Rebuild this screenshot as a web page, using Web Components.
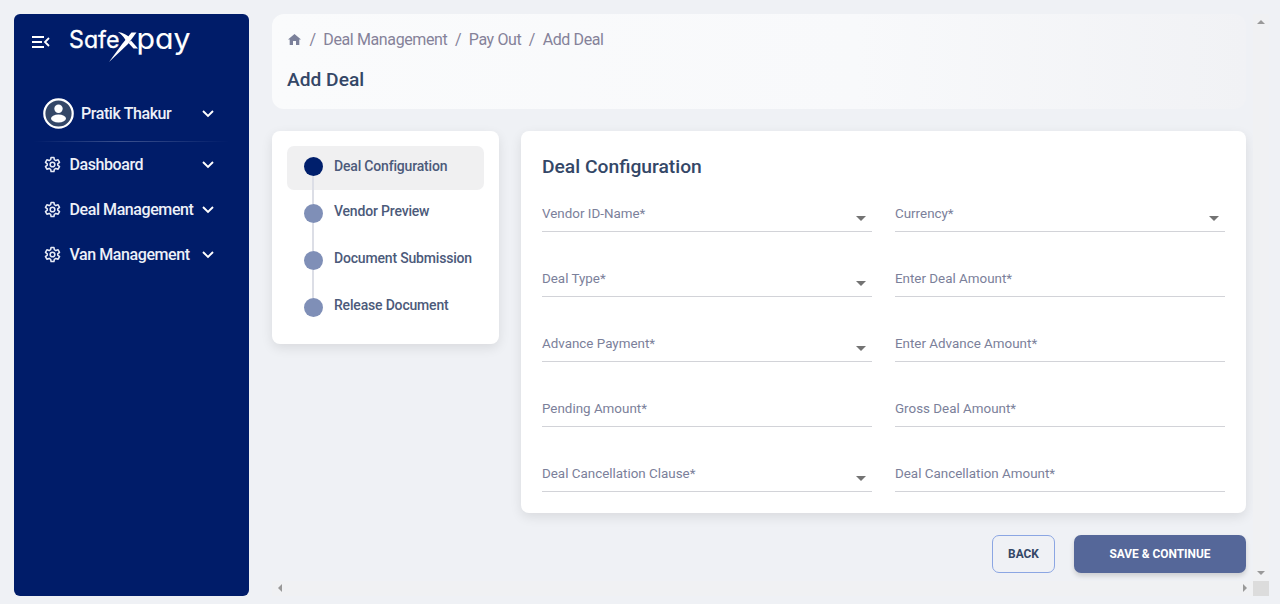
<!DOCTYPE html>
<html lang="en">
<head>
<meta charset="utf-8">
<title>Add Deal</title>
<style>
html,body{margin:0;height:100%;overflow:hidden;background:#eff1f5;font-family:Roboto,sans-serif}
</style>
</head>
<body>
<deal-app></deal-app>
<script>
const define = (name, css, html) => customElements.define(name, class extends HTMLElement {
  constructor() {
    super();
    const root = this.attachShadow({mode: 'open'});
    const t = document.createElement('template');
    const body = typeof html === 'function' ? html(this) : html;
    t.innerHTML = `<style>*{box-sizing:border-box}${css}</style>${body}`;
    root.appendChild(t.content.cloneNode(true));
  }
});

define('safe-logo', `
  :host{display:block;width:122px;height:36px}
  svg{display:block;overflow:visible}
  text{font-family:Inter,sans-serif;font-feature-settings:"cv11" 1;fill:#fff;stroke:#fff;stroke-width:.3}`,
  `<svg width="122" height="36" viewBox="0 0 122 36">
    <text x="0" y="22" font-size="24" font-weight="400" textLength="50.500" lengthAdjust="spacingAndGlyphs">Safe</text>
    <path d="M49 6C54 6.500 58.500 9 61.500 12.500L58.500 18C56.500 13 53 8.500 49 6Z" fill="#fff"/>
    <path d="M62.500 6.500H67.500L59 18L40 36L53.500 17.500L58 12Z" fill="#fff"/>
    <path d="M59.500 17L62 14.500L69 22.500H64.500Z" fill="#fff"/>
    <text x="67.500" y="22.500" font-size="29" font-weight="400" textLength="54" lengthAdjust="spacingAndGlyphs" style="stroke-width:.1">pay</text>
  </svg>`);

define('chevron-down', `:host{display:block;width:12px;height:8px}svg{display:block}`,
  `<svg width="12" height="8" viewBox="0 0 12 8"><path d="M1 1L6 6L11 1" fill="none" stroke="#fff" stroke-width="1.900"/></svg>`);

define('gear-icon', `:host{display:block;width:17px;height:17px}svg{display:block}`,
  `<svg width="17" height="17" viewBox="0 0 24 24" fill="none" stroke="#e6eaf5" stroke-width="2.200" stroke-linejoin="round"><circle cx="12" cy="12" r="3.300"/><path d="M10 2h4l.6 3.200 2.200 1.300 3.100-1.100 2 3.500-2.500 2.100v2l2.500 2.100-2 3.500-3.100-1.100-2.200 1.300L14 22h-4l-.6-3.200-2.200-1.300-3.100 1.100-2-3.500L4.600 13v-2L2.100 8.900l2-3.500 3.100 1.100 2.200-1.300z"/></svg>`);

define('nav-item', `
  :host{display:flex;align-items:center;height:45.200px;padding:0 35px 0 30px;color:#edf0f8;font-size:16px;letter-spacing:-.42px;font-weight:500;white-space:nowrap}
  span{margin-left:8.500px;flex:1}`,
  `<gear-icon></gear-icon><span><slot></slot></span><chevron-down></chevron-down>`);

define('side-bar', `
  :host{display:block;width:235.400px;height:582.400px;background:#001c69;border-radius:6px;flex:none}
  .top{display:flex;padding:12px 0 0 18px;height:84px}
  .menu{margin:10px 19px 0 0;display:block}
  .user{display:flex;align-items:center;height:31px;padding:0 35px 0 29px;color:#edf0f8;font-size:16px;letter-spacing:-.42px;font-weight:500}
  .user span{flex:1;margin-left:7px}
  hr{border:0;height:1px;margin:12px 20px 0;background:linear-gradient(90deg,#7686b400,#7686b480 45%,#7686b400)}`,
  `<div class="top">
    <svg class="menu" width="18" height="12" viewBox="0 0 18 12" fill="none" stroke="#fff" stroke-width="1.800"><path d="M0 1h12M0 6h10M0 11h12M17 2L13 6L17 10"/></svg>
    <safe-logo></safe-logo>
  </div>
  <div class="user">
    <svg width="31" height="31" viewBox="0 0 31 31"><circle cx="15.500" cy="15.500" r="14.200" fill="#344767" stroke="#fff" stroke-width="2.200"/><circle cx="15.500" cy="10.800" r="4.200" fill="#fff"/><ellipse cx="15.500" cy="20.500" rx="7.500" ry="4" fill="#fff"/></svg>
    <span>Pratik Thakur</span><chevron-down></chevron-down>
  </div>
  <hr>
  <nav><nav-item>Dashboard</nav-item><nav-item>Deal Management</nav-item><nav-item>Van Management</nav-item></nav>`);

define('page-header', `
  :host{display:block;height:95px;border-radius:12px;padding:14px 15px 0;background:linear-gradient(90deg,#fafbfc,#f8f9fb 60%,#f1f2f5)}
  .crumbs{display:flex;align-items:center;height:22px;color:#858299;font-size:16px;letter-spacing:-.38px;white-space:pre}
  svg{margin:0 1px;display:block}
  i{font-style:normal;margin:0 7.600px 0 7.500px}
  h1{margin:18.500px 0 0;font-size:19.200px;line-height:22px;font-weight:500;color:#344767}`,
  `<div class="crumbs"><svg width="13" height="11" viewBox="0 0 13 12" preserveAspectRatio="none"><path d="M6.500 0L13 6H11.300V12H8V7.700H5V12H1.700V6H0Z" fill="#7b809a"/></svg><i>/</i><span>Deal Management</span><i>/</i><span>Pay Out</span><i>/</i><span>Add Deal</span></div>
  <h1>Add Deal</h1>`);

define('step-item', `
  :host{display:flex;height:47px;margin-left:17px;color:#4c5a7a;font-size:14px;letter-spacing:-.18px;font-weight:500}
  .rail{width:19px;display:flex;flex-direction:column;align-items:center}
  b{width:19px;height:19px;border-radius:50%;background:#7f8fb7;flex:none}
  .rail::after{content:"";flex:1;width:2px;background:#dcdee6}
  :host([last]) .rail::after{display:none}
  :host([active]) b{background:#001f6c}
  span{margin:-1.500px 0 0 11px;line-height:16px;white-space:nowrap}
  :host([active]) span{margin-top:1.200px}`,
  `<div class="rail"><b></b></div><span><slot></slot></span>`);

define('step-card', `
  :host{display:grid;width:227px;height:213px;padding:15px;border-radius:8px;background:#fff;box-shadow:0 4px 12px #00000018;flex:none;grid-template-rows:44px 1fr}
  .hl,.list{grid-column:1}
  .hl{grid-row:1;background:#f0f0f1;border-radius:7px}
  .list{grid-row:1/3;padding-top:11.500px}`,
  `<div class="hl"></div><div class="list"><step-item active>Deal Configuration</step-item><step-item>Vendor Preview</step-item><step-item>Document Submission</step-item><step-item last>Release Document</step-item></div>`);

define('form-field', `
  :host{display:flex;height:65px;align-items:flex-start}
  .f{display:flex;flex:1;justify-content:space-between;height:26px;border-bottom:1px solid #d2d3d8;font-size:13.400px;line-height:16px;color:#7b809a;padding-right:6px}
  svg{display:none;margin-top:10px}
  :host([select]) svg{display:block}`,
  `<div class="f"><slot></slot><svg width="10" height="5" viewBox="0 0 10 5"><path d="M0 0H10L5 5Z" fill="#737373"/></svg></div>`);

define('deal-form', `
  :host{display:block;flex:1;height:382.500px;border-radius:8px;padding:24px 21px 0;background:#fff;box-shadow:0 4px 12px #00000018}
  h2{margin:0 0 27px;font-size:19.250px;line-height:24px;font-weight:500;color:#344767}
  .grid{display:grid;grid-template-columns:330px 330px;column-gap:23px}`,
  `<h2>Deal Configuration</h2><div class="grid">
   <form-field select>Vendor ID-Name*</form-field><form-field select>Currency*</form-field>
   <form-field select>Deal Type*</form-field><form-field>Enter Deal Amount*</form-field>
   <form-field select>Advance Payment*</form-field><form-field>Enter Advance Amount*</form-field>
   <form-field>Pending Amount*</form-field><form-field>Gross Deal Amount*</form-field>
   <form-field select>Deal Cancellation Clause*</form-field><form-field>Deal Cancellation Amount*</form-field></div>`);

define('action-button', `
  :host{display:flex;align-items:center;justify-content:center;width:63px;height:38px;border:1px solid #8ba6e3;border-radius:7px;font-size:11.900px;font-weight:700;color:#344767}
  :host([primary]){width:172px;border:0;background:#556799;color:#fff;box-shadow:0 3px 5px #00000026}`,
  `<slot></slot>`);

define('scroll-track', `
  :host{display:flex;justify-content:space-between;align-items:center;background:#f0f1f3}
  :host([vertical]){flex-direction:column;padding:6px 0}
  :host(:not([vertical])){padding:0 6px}
  i{border:4px solid transparent;width:0;height:0}
  .u{border-bottom-color:#999;border-top:0}.d{border-top-color:#999;border-bottom:0}
  .l{border-right-color:#999;border-left:0}.r{border-left-color:#999;border-right:0}`,
  el => el.hasAttribute('vertical') ? `<i class="u"></i><i class="d"></i>` : `<i class="l"></i><i class="r"></i>`);

define('deal-app', `
  :host{display:flex;width:1280px;height:604px;padding:14px 10.500px 0 14px;box-sizing:border-box;background:#eff1f5}
  main{margin-left:22.600px;display:grid;grid-template-columns:981.500px 15.500px;grid-template-rows:566.500px 15.500px}
  .content{padding-right:7.500px}
  .row{display:flex;gap:22px;margin-top:21.600px;align-items:flex-start}
  .actions{display:flex;justify-content:flex-end;gap:19px;margin-top:22px}
  .corner{background:#dcdcdc}`,
  `<side-bar></side-bar><main>
    <div class="content"><page-header></page-header><div class="row"><step-card></step-card><deal-form></deal-form></div>
    <div class="actions"><action-button>BACK</action-button><action-button primary>SAVE &amp; CONTINUE</action-button></div></div>
    <scroll-track vertical></scroll-track><scroll-track></scroll-track><div class="corner"></div></main>`);
</script>
</body>
</html>
